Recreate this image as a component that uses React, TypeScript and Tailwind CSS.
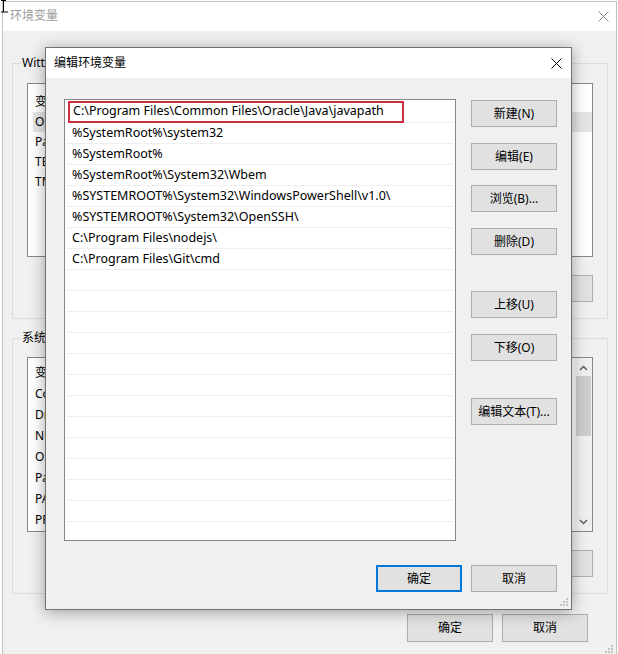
import React from 'react';

const paths = [
    'C:\\Program Files\\Common Files\\Oracle\\Java\\javapath',
    '%SystemRoot%\\system32',
    '%SystemRoot%',
    '%SystemRoot%\\System32\\Wbem',
    '%SYSTEMROOT%\\System32\\WindowsPowerShell\\v1.0\\',
    '%SYSTEMROOT%\\System32\\OpenSSH\\',
    'C:\\Program Files\\nodejs\\',
    'C:\\Program Files\\Git\\cmd',
];

const userVars = ['OneDrive', 'Path', 'TEMP', 'TMP'];
const sysVars = ['ComSpec', 'DriverData', 'NUMBER_OF_PROCESSORS', 'OS', 'Path', 'PATHEXT', 'PROCESSOR_ARCHITECTURE'];

const CloseIcon = ({ color }: { color: string }) => (
    <svg width="11" height="11" viewBox="0 0 11 11">
        <path d="M0.5 0.5 L10.5 10.5 M10.5 0.5 L0.5 10.5" stroke={color} strokeWidth="1" fill="none" />
    </svg>
);

const Grip = () => (
    <svg width="10" height="10" viewBox="0 0 10 10">
        {[
            [8, 2], [8, 5], [5, 5], [8, 8], [5, 8], [2, 8],
        ].map(([x, y], i) => (
            <rect key={i} x={x - 1} y={y - 1} width="2" height="2" fill="#c3c3c3" />
        ))}
    </svg>
);

const Btn = ({ children, className = '', primary = false }: { children: React.ReactNode; className?: string; primary?: boolean }) => (
    <div
        className={`w-[86px] shrink-0 bg-[#e1e1e1] flex items-center justify-center text-[12px] text-black ${
            primary ? 'border-2 border-[#0078d7]' : 'border border-[#adadad]'
        } ${className || 'h-[27px]'}`}
    >
        {children}
    </div>
);

const App: React.FC = () => {
    const emptyRows = Array.from({ length: 13 });

    return (
        <div className="relative w-[618px] h-[654px] overflow-hidden bg-white font-['Noto_Sans','Noto_Sans_CJK_SC',sans-serif] text-[12px] text-black">
            {/* I-beam cursor */}
            <svg className="absolute left-0 top-0 z-20" width="8" height="14" viewBox="0 0 8 14">
                <path d="M1 0.5 H6 M3.5 0.5 V12 M1 12 H8" stroke="#000" strokeWidth="1" fill="none" />
            </svg>

            {/* background window: 环境变量 */}
            <div className="absolute left-[2px] top-[1px] w-[615px] h-[670px] border border-[#c2c2c2] flex flex-col">
                <div className="h-[29px] bg-white flex items-center justify-between pl-[7px] pr-[7px]">
                    <span className="text-[#9b9b9b] text-[12px] -mt-[2px]">环境变量</span>
                    <CloseIcon color="#8a8a8a" />
                </div>
                <div className="flex-1 bg-[#f0f0f0] px-[9px] pt-[24px]">
                    <fieldset className="w-[592px] border border-[#dcdcdc] px-[14px] pb-[16px]">
                        <legend className="-ml-[6px] px-[1px] leading-[16px]">Witt 的用户变量(U)</legend>
                        <div className="mt-[12px] h-[174px] w-[566px] border border-[#828790] bg-white pt-[7px] pl-[5px]">
                            <div className="h-[21px] flex items-center pl-[2px]">变量</div>
                            {userVars.map((v, i) => (
                                <div key={v} className={`h-[20px] flex items-center pl-[2px] ${i === 0 ? 'bg-[#e5e5e5]' : ''}`}>
                                    {v}
                                </div>
                            ))}
                        </div>
                        <div className="mt-[18px] flex justify-end gap-[10px]">
                            <Btn>新建(N)...</Btn>
                            <Btn>编辑(E)...</Btn>
                            <Btn>删除(D)</Btn>
                        </div>
                    </fieldset>

                    <fieldset className="mt-[11px] w-[592px] border border-[#dcdcdc] px-[14px] pb-[16px]">
                        <legend className="-ml-[6px] px-[1px] leading-[16px]">系统变量(S)</legend>
                        <div className="mt-[11px] h-[175px] w-[566px] border border-[#828790] bg-white flex">
                            <div className="flex-1 pt-[4px] pl-[5px]">
                                <div className="h-[21px] flex items-center pl-[2px]">变量</div>
                                {sysVars.map((v) => (
                                    <div key={v} className="h-[21px] flex items-center pl-[2px]">
                                        {v}
                                    </div>
                                ))}
                            </div>
                            <div className="w-[17px] bg-[#f0f0f0] flex flex-col items-center">
                                <svg className="mt-[7px]" width="9" height="6" viewBox="0 0 9 6">
                                    <path d="M1 5 L4.5 1.5 L8 5" stroke="#606060" strokeWidth="1.5" fill="none" />
                                </svg>
                                <div className="mt-[5px] w-[15px] h-[60px] bg-[#cdcdcd]" />
                                <div className="flex-1" />
                                <svg className="mb-[6px]" width="9" height="6" viewBox="0 0 9 6">
                                    <path d="M1 1 L4.5 4.5 L8 1" stroke="#606060" strokeWidth="1.5" fill="none" />
                                </svg>
                            </div>
                        </div>
                        <div className="mt-[18px] flex justify-end gap-[10px]">
                            <Btn>新建(W)...</Btn>
                            <Btn>编辑(I)...</Btn>
                            <Btn>删除(L)</Btn>
                        </div>
                    </fieldset>

                    <div className="mt-[20px] w-[576px] flex justify-end gap-[9px]">
                        <Btn className="h-[28px]">确定</Btn>
                        <Btn className="h-[28px]">取消</Btn>
                    </div>
                </div>
                <div className="absolute right-[2px] bottom-[16px]">
                    <Grip />
                </div>
            </div>

            {/* foreground dialog: 编辑环境变量 */}
            <div className="absolute left-[45px] top-[47px] w-[527px] h-[563px] border border-[#737373] bg-[#f0f0f0] shadow-[0_2px_14px_rgba(0,0,0,0.35)] flex flex-col z-10">
                <div className="h-[30px] bg-white flex items-center justify-between pl-[8px] pr-[9px]">
                    <span>编辑环境变量</span>
                    <CloseIcon color="#000" />
                </div>
                <div className="flex pl-[18px] pt-[21px]">
                    <div className="w-[392px] h-[442px] border border-[#828790] bg-white p-[2px] overflow-hidden text-[12.5px]">
                        {paths.map((p, i) => (
                            <div key={p} className="h-[21px] border-b border-[#efefef] flex items-center">
                                {i === 0 ? (
                                    <div className="ml-[1px] -mt-[1px] h-[22px] w-[336px] border-2 border-[#c8303f] flex items-center pl-[3px]">
                                        {p}
                                    </div>
                                ) : (
                                    <span className="pl-[5px]">{p}</span>
                                )}
                            </div>
                        ))}
                        {emptyRows.map((_, i) => (
                            <div key={i} className="h-[21px] border-b border-[#efefef]" />
                        ))}
                    </div>
                    <div className="ml-[15px] flex flex-col">
                        <Btn className="mt-[1px] h-[27px]">新建(N)</Btn>
                        <Btn className="mt-[16px] h-[27px]">编辑(E)</Btn>
                        <Btn className="mt-[15px] h-[27px]">浏览(B)...</Btn>
                        <Btn className="mt-[16px] h-[27px]">删除(D)</Btn>
                        <Btn className="mt-[36px] h-[27px]">上移(U)</Btn>
                        <Btn className="mt-[16px] h-[27px]">下移(O)</Btn>
                        <Btn className="mt-[37px] h-[27px]">编辑文本(T)...</Btn>
                    </div>
                </div>
                <div className="mt-[24px] flex justify-end gap-[9px] pr-[14px]">
                    <Btn primary>确定</Btn>
                    <Btn>取消</Btn>
                </div>
                <div className="absolute right-[2px] bottom-[2px]">
                    <Grip />
                </div>
            </div>
        </div>
    );
};

export default App;
